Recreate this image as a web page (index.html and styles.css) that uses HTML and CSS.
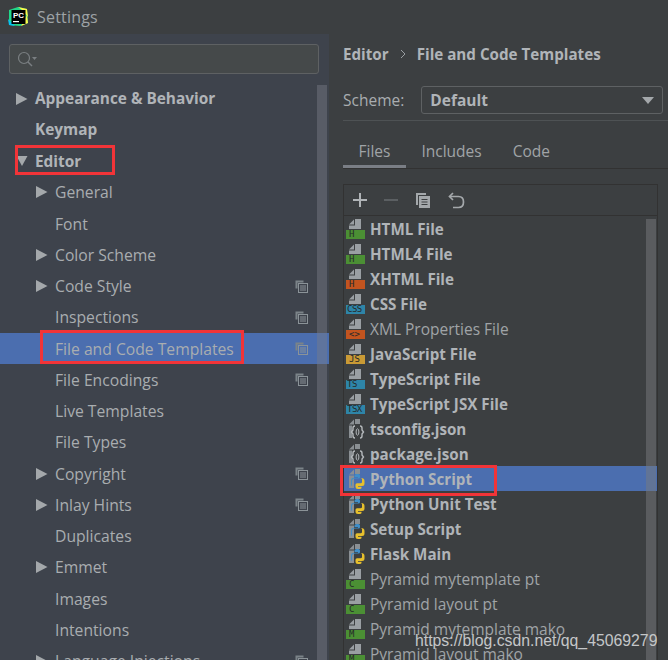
FILE: index.html
```html
<!DOCTYPE html>
<html lang="en">
<head>
<meta charset="utf-8">
<title>Settings</title>
<link rel="stylesheet" href="styles.css">
</head>
<body>
<svg class="defs" width="0" height="0" aria-hidden="true">
  <symbol id="arrow" viewBox="0 0 12 14"><path d="M0 1 L11.5 7 L0 13 Z" fill="#a4a8ab"/></symbol>
  <symbol id="arrow-down" viewBox="0 0 12 14"><path d="M0.5 2 L11.5 2 L6 12 Z" fill="#a4a8ab"/></symbol>
  <symbol id="copy" viewBox="0 0 13 13"><path d="M0.5 0.5H8.5V2.5H2.5V8.5H0.5Z" fill="#7b8388"/><rect x="3.5" y="3.5" width="9" height="9" fill="none" stroke="#8b9398"/><path d="M5 6H11M5 8H11M5 10H11" stroke="#8b9398"/></symbol>
  <symbol id="page" viewBox="0 0 20 20"><path d="M9 0H15V10H3V6.5H9Z" fill="#9a9fa3"/><path d="M8 0.5V5.5H3Z" fill="#9a9fa3"/></symbol>
  <symbol id="py" viewBox="0 0 20 20"><path d="M9 0H14V5H9Z M8 0.5V5.5H3Z M3 6.5H8V19H3Z" fill="#8a8f93"/><path d="M6 17V12.5Q6 9.5 9 9.5H12.5Q14 9.5 14 8V6.5Q14 5 12.5 5H10.5Q8.5 5 8.5 6.5V8H12V8.8H8Q5 8.8 5 12V14.5Q5 17 6 17Z" fill="#3f8ec9"/><path d="M15 9Q18.5 9 18.5 12V14.5Q18.5 17 16 17H12V17.8H15.5V19Q15.5 20 13.5 20H12Q9.5 20 9.5 18V15.8Q9.5 14.3 11 14.3H14.5Q16 14.3 16 13V10Z" fill="#e8c02c"/></symbol>
  <symbol id="json" viewBox="0 0 20 20"><path d="M9 0H14V5H9Z M8 0.5V5.5H3Z M3 6.5H6V19H3Z" fill="#8a8f93"/><path d="M9 7Q7 7 7 9V11L5.5 13L7 15V17Q7 19 9 19M14 7Q16 7 16 9V11L17.5 13L16 15V17Q16 19 14 19" fill="none" stroke="#b5b9bc" stroke-width="1.4"/><ellipse cx="11.5" cy="13" rx="1.4" ry="3.2" fill="none" stroke="#b5b9bc"/></symbol>
</svg>

<div class="window">
  <header class="titlebar">
    <svg class="logo" viewBox="0 0 20 20" width="20" height="20">
      <path d="M1 3L10 0L19 2L20 16L12 19L1 18Z" fill="#21d789"/>
      <path d="M10 0L19 2L20 10L14 3Z" fill="#fcf84a"/>
      <path d="M13 19L20 16L19 8Z" fill="#fcf84a"/>
      <path d="M0 12L1 18L7 19Z" fill="#07c3f2"/>
      <rect x="3.5" y="3" width="14" height="14" fill="#000"/>
      <text x="5" y="10.5" class="logo-text">PC</text>
      <rect x="5" y="14" width="6" height="1.2" fill="#fff"/>
    </svg>
    <span class="title">Settings</span>
  </header>

  <div class="content">
    <aside class="sidebar">
      <div class="search">
        <svg viewBox="0 0 22 16" width="22" height="16"><circle cx="7" cy="7" r="5.5" fill="none" stroke="#7a7f82" stroke-width="1.2"/><path d="M11 11L15 15" stroke="#7a7f82" stroke-width="1.4"/><path d="M15 6H20L17.5 9Z" fill="#7a7f82"/></svg>
      </div>
      <ul class="tree">
        <li class="node"><svg class="tw"><use href="#arrow"/></svg><b>Appearance &amp; Behavior</b></li>
        <li class="node"><span class="tw"></span><b>Keymap</b></li>
        <li class="node"><svg class="tw"><use href="#arrow-down"/></svg><b>Editor</b></li>
        <li class="node sub"><svg class="tw"><use href="#arrow"/></svg><span>General</span></li>
        <li class="node sub"><span class="tw"></span><span>Font</span></li>
        <li class="node sub"><svg class="tw"><use href="#arrow"/></svg><span>Color Scheme</span></li>
        <li class="node sub"><svg class="tw"><use href="#arrow"/></svg><span>Code Style</span><svg class="cp"><use href="#copy"/></svg></li>
        <li class="node sub"><span class="tw"></span><span>Inspections</span><svg class="cp"><use href="#copy"/></svg></li>
        <li class="node sub selected"><span class="tw"></span><span>File and Code Templates</span><svg class="cp"><use href="#copy"/></svg></li>
        <li class="node sub"><span class="tw"></span><span>File Encodings</span><svg class="cp"><use href="#copy"/></svg></li>
        <li class="node sub"><span class="tw"></span><span>Live Templates</span></li>
        <li class="node sub"><span class="tw"></span><span>File Types</span></li>
        <li class="node sub"><svg class="tw"><use href="#arrow"/></svg><span>Copyright</span><svg class="cp"><use href="#copy"/></svg></li>
        <li class="node sub"><svg class="tw"><use href="#arrow"/></svg><span>Inlay Hints</span><svg class="cp"><use href="#copy"/></svg></li>
        <li class="node sub"><span class="tw"></span><span>Duplicates</span></li>
        <li class="node sub"><svg class="tw"><use href="#arrow"/></svg><span>Emmet</span></li>
        <li class="node sub"><span class="tw"></span><span>Images</span></li>
        <li class="node sub"><span class="tw"></span><span>Intentions</span></li>
        <li class="node sub"><svg class="tw"><use href="#arrow"/></svg><span>Language Injections</span><svg class="cp"><use href="#copy"/></svg></li>
      </ul>
      <div class="side-scroll"></div>
    </aside>

    <main class="main">
      <div class="crumbs"><b>Editor</b><svg viewBox="0 0 6 10" width="6" height="10"><path d="M1 1L5 5L1 9" fill="none" stroke="#9a9fa3"/></svg><b>File and Code Templates</b></div>
      <div class="scheme">
        <span class="scheme-label">Scheme:</span>
        <div class="select"><b>Default</b><svg viewBox="0 0 12 7" width="12" height="7"><path d="M0 0H12L6 7Z" fill="#a4a8ab"/></svg></div>
      </div>
      <nav class="tabs">
        <span class="tab active">Files</span>
        <span class="tab">Includes</span>
        <span class="tab">Code</span>
      </nav>
      <section class="panel">
        <div class="toolbar">
          <svg viewBox="0 0 14 14" width="14" height="14"><path d="M7 0V14M0 7H14" stroke="#b0b4b7" stroke-width="2"/></svg>
          <svg viewBox="0 0 14 14" width="14" height="14"><path d="M0 7H14" stroke="#5b5f62" stroke-width="2"/></svg>
          <svg viewBox="0 0 16 17" width="16" height="17"><path d="M1 1H11V3H3V13H1Z" fill="#a4a8ab"/><rect x="4" y="4" width="11" height="12" fill="#a4a8ab"/><path d="M6.5 7.5H12.5M6.5 10H12.5M6.5 12.5H12.5" stroke="#3c3f41"/></svg>
          <svg viewBox="0 0 17 17" width="17" height="17"><path d="M5 1L1.5 4.5L5 8" fill="none" stroke="#a4a8ab" stroke-width="1.7"/><path d="M2 4.5H10.5Q15.5 4.5 15.5 10Q15.5 15.5 10.5 15.5H5" fill="none" stroke="#a4a8ab" stroke-width="1.7"/></svg>
        </div>
        <ul class="files">
          <li><span class="fi"><svg><use href="#page"/></svg><i class="tag green">H</i></span><b>HTML File</b></li>
          <li><span class="fi"><svg><use href="#page"/></svg><i class="tag green">H</i></span><b>HTML4 File</b></li>
          <li><span class="fi"><svg><use href="#page"/></svg><i class="tag orange">H</i></span><b>XHTML File</b></li>
          <li><span class="fi"><svg><use href="#page"/></svg><i class="tag blue">CSS</i></span><b>CSS File</b></li>
          <li><span class="fi"><svg><use href="#page"/></svg><i class="tag orange">&lt;&gt;</i></span><span>XML Properties File</span></li>
          <li><span class="fi"><svg><use href="#page"/></svg><i class="tag yellow">JS</i></span><b>JavaScript File</b></li>
          <li><span class="fi"><svg><use href="#page"/></svg><i class="tag blue">TS</i></span><b>TypeScript File</b></li>
          <li><span class="fi"><svg><use href="#page"/></svg><i class="tag blue">TSX</i></span><b>TypeScript JSX File</b></li>
          <li><span class="fi"><svg><use href="#json"/></svg></span><b>tsconfig.json</b></li>
          <li><span class="fi"><svg><use href="#json"/></svg></span><b>package.json</b></li>
          <li class="selected"><span class="fi"><svg><use href="#py"/></svg></span><b>Python Script</b></li>
          <li><span class="fi"><svg><use href="#py"/></svg></span><b>Python Unit Test</b></li>
          <li><span class="fi"><svg><use href="#py"/></svg></span><b>Setup Script</b></li>
          <li><span class="fi"><svg><use href="#py"/></svg></span><b>Flask Main</b></li>
          <li><span class="fi"><svg><use href="#page"/></svg><i class="tag green">C</i></span><span>Pyramid mytemplate pt</span></li>
          <li><span class="fi"><svg><use href="#page"/></svg><i class="tag green">C</i></span><span>Pyramid layout pt</span></li>
          <li><span class="fi"><svg><use href="#page"/></svg><i class="tag green">M</i></span><span>Pyramid mytemplate mako</span></li>
          <li><span class="fi"><svg><use href="#page"/></svg><i class="tag green">M</i></span><span>Pyramid layout mako</span></li>
        </ul>
        <div class="list-scroll"></div>
      </section>
    </main>
  </div>

  <div class="mark mark-editor"></div>
  <div class="mark mark-fct"></div>
  <div class="mark mark-py"></div>
  <div class="watermark">https://blog.csdn.net/qq_45069279</div>
</div>
</body>
</html>
```
FILE: styles.css
```css
* { box-sizing: border-box; }
html, body { margin: 0; padding: 0; }
body { background: #3c3f41; }
.defs { display: block; height: 0; }
ul { list-style: none; margin: 0; padding: 0; }
b { font-weight: 700; }

.window {
  position: relative;
  width: 668px;
  height: 660px;
  overflow: hidden;
  background: #3c3f41;
  color: #a9adb0;
  font-family: "Open Sans", "Noto Sans", sans-serif;
  font-size: 15.5px;
}

.titlebar {
  display: flex;
  align-items: center;
  gap: 9px;
  height: 34px;
  padding: 0 8px;
  background: #3c3f41;
}
.logo { flex: none; margin-bottom: 1px; }
.logo-text { font: 700 8px "Liberation Sans", sans-serif; fill: #fff; }
.title { font-size: 16px; color: #9ea3a6; letter-spacing: 0.2px; }

.content { display: flex; height: 626px; }

.sidebar {
  position: relative;
  flex: none;
  width: 329px;
  background: #3e434c;
  padding-top: 10px;
  overflow: hidden;
}
.search {
  display: flex;
  align-items: center;
  width: 310px;
  height: 30px;
  margin-left: 9px;
  padding-left: 7px;
  background: #45494a;
  border: 1px solid #5e6163;
  border-radius: 3px;
}
.tree { margin-top: 9px; }
.node {
  display: flex;
  align-items: center;
  height: 31.25px;
  padding-left: 16px;
  white-space: nowrap;
  position: relative;
  font-size: 15.7px;
}
.node b { color: #b0b4b8; font-size: 15.4px; }
.node.sub { padding-left: 36px; }
.tw { flex: none; width: 12px; height: 14px; margin-right: 7px; }
.cp { position: absolute; left: 295px; top: 9px; width: 13px; height: 13px; }
.node.selected { background: #4b6eaf; }
.side-scroll {
  position: absolute;
  left: 317px;
  top: 51px;
  bottom: 0;
  width: 10px;
  background: rgba(120, 125, 135, 0.45);
}

.main { flex: 1; min-width: 0; padding-left: 14px; }
.crumbs {
  display: flex;
  align-items: center;
  gap: 11px;
  height: 40px;
  color: #b0b4b8;
  font-size: 15.2px;
}
.scheme {
  display: flex;
  align-items: center;
  gap: 17px;
  height: 30px;
  margin-top: 11px;
}
.scheme-label { color: #a9adb0; }
.select {
  display: flex;
  align-items: center;
  justify-content: space-between;
  width: 242px;
  height: 28px;
  padding: 0 8px;
  border: 1px solid #5e6163;
  border-radius: 3px;
  color: #b0b4b8;
}
.tabs {
  display: flex;
  align-items: stretch;
  height: 49px;
  margin-top: 5px;
  padding-top: 13px;
  border-top: 1px solid #4e5254;
  border-bottom: 1px solid #323232;
}
.tab {
  display: flex;
  align-items: center;
  padding: 0 15.5px;
  color: #a0a4a7;
}
.tab.active { box-shadow: inset 0 -3px 0 #7a7e85; }

.panel {
  position: relative;
  width: 315px;
  height: 476px;
  margin-top: 15px;
  border: 1px solid #323232;
  border-bottom: 0;
  overflow: hidden;
}
.toolbar {
  display: flex;
  align-items: center;
  gap: 17px;
  height: 31px;
  padding-left: 9px;
  border-bottom: 1px solid #323232;
}
.files li {
  display: flex;
  align-items: center;
  height: 25px;
  padding-left: 2px;
  white-space: nowrap;
  color: #a0a4a7;
}
.files b { color: #b0b4b8; font-size: 15.2px; }
.files li.selected { background: #4b6eaf; }
.fi { position: relative; flex: none; width: 20px; height: 20px; margin-right: 4px; }
.fi svg { width: 20px; height: 20px; display: block; }
.tag {
  position: absolute;
  left: 0;
  bottom: 0;
  width: 19px;
  height: 9px;
  font: normal 400 9px/9px "DejaVu Sans Mono", monospace;
  color: #26292a;
  padding-left: 3px;
  overflow: hidden;
}
.green { background: #4b8f34; }
.orange { background: #c2541f; }
.blue { background: #2e85a8; letter-spacing: -0.5px; padding-left: 1px; }
.yellow { background: #c99a35; }
.list-scroll {
  position: absolute;
  left: 302px;
  top: 34px;
  bottom: 0;
  width: 10px;
  background: rgba(120, 122, 125, 0.5);
}

.mark { position: absolute; border: 3px solid #f23438; }
.mark-editor { left: 15px; top: 145px; width: 100px; height: 30px; }
.mark-fct { left: 40px; top: 330px; width: 204px; height: 34px; }
.mark-py { left: 340px; top: 465px; width: 157px; height: 31px; }

.watermark {
  position: absolute;
  left: 415px;
  top: 632px;
  font: 15.8px "Liberation Sans", sans-serif;
  color: #c4c6c8;
  white-space: nowrap;
}
```
